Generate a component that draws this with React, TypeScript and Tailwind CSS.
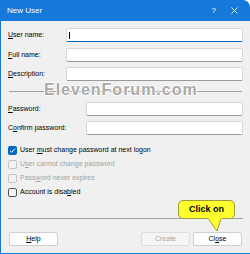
import React from "react";

const font = { fontFamily: '"Liberation Sans", Arial, sans-serif' };

function U({ children }: { children: React.ReactNode }) {
  return <span className="underline underline-offset-[1px] decoration-[0.5px]">{children}</span>;
}

function Field({ label, labelW, focused }: { label: React.ReactNode; labelW: string; focused?: boolean }) {
  return (
    <div className="flex items-center h-[14px]">
      <div className={`${labelW} shrink-0 text-[7px] text-black`}>{label}</div>
      <div
        className={`flex-1 h-[14px] bg-white border border-[#d6d6d6] rounded-[2px] relative ${
          focused ? "border-b-[#0067c0] border-b-[1.5px]" : "border-b-[#9a9a9a]"
        }`}
      >
        {focused && <div className="absolute left-[2px] top-[3px] w-px h-[7px] bg-black" />}
      </div>
    </div>
  );
}

function Check({ label, checked, disabled }: { label: React.ReactNode; checked?: boolean; disabled?: boolean }) {
  return (
    <div className="flex items-center h-[14px] gap-[2px]">
      {checked ? (
        <div className="w-[9px] h-[9px] rounded-[2px] bg-[#0067c0] flex items-center justify-center">
          <svg width="7" height="7" viewBox="0 0 7 7">
            <path d="M1 3.6 L2.8 5.3 L6 1.6" stroke="white" strokeWidth="1" fill="none" />
          </svg>
        </div>
      ) : (
        <div
          className={`w-[9px] h-[9px] rounded-[2px] border ${
            disabled ? "border-[#c4c4c4] bg-[#f3f3f3]" : "border-[#555] bg-[#f7f7f7]"
          }`}
        />
      )}
      <span className={`text-[7px] ml-[1px] ${disabled ? "text-[#a2a2a2]" : "text-black"}`}>{label}</span>
    </div>
  );
}

function Btn({ children, disabled }: { children: React.ReactNode; disabled?: boolean }) {
  return (
    <div
      className={`w-[49px] h-[14px] rounded-[2px] border flex items-center justify-center text-[7px] ${
        disabled ? "border-[#dedede] bg-[#f5f5f5] text-[#a8a8a8]" : "border-[#d0d0d0] bg-[#fdfdfd] text-black"
      }`}
    >
      {children}
    </div>
  );
}

export default function App() {
  return (
    <div className="w-[250px] h-[254px] relative overflow-hidden bg-white" style={font}>
      <div className="flex flex-col h-full border-l border-b border-[#1479d8] rounded-tr-[7px] overflow-hidden">
        {/* Title bar */}
        <div className="h-[21px] bg-[#1479d8] flex items-center pl-[6px] pr-[12px] text-white shrink-0">
          <span className="text-[8px]">New User</span>
          <div className="ml-auto flex items-center gap-[15px]">
            <span className="text-[8px]">?</span>
            <svg width="7" height="7" viewBox="0 0 7 7">
              <path d="M0.5 0.5 L6.5 6.5 M6.5 0.5 L0.5 6.5" stroke="white" strokeWidth="0.9" />
            </svg>
          </div>
        </div>
        {/* Body */}
        <div className="flex-1 bg-[#f0f0f0] flex flex-col pl-[7px] pr-[7px]">
          <div className="mt-[7px]">
            <Field label={<><U>U</U>ser name:</>} labelW="w-[58px]" focused />
          </div>
          <div className="mt-[6px]">
            <Field label={<><U>F</U>ull name:</>} labelW="w-[58px]" />
          </div>
          <div className="mt-[5px]">
            <Field label={<><U>D</U>escription:</>} labelW="w-[58px]" />
          </div>
          <div className="mt-[10px] h-px bg-[#a0a0a0] ml-[1px] mr-[1px]" />
          <div className="mt-[10px]">
            <Field label={<><U>P</U>assword:</>} labelW="w-[78px]" />
          </div>
          <div className="mt-[5px]">
            <Field label={<>C<U>o</U>nfirm password:</>} labelW="w-[78px]" />
          </div>
          <div className="mt-[8px] flex flex-col">
            <Check checked label={<>User <U>m</U>ust change password at next logon</>} />
            <Check disabled label={<>U<U>s</U>er cannot change password</>} />
            <Check disabled label={<>Pass<U>w</U>ord never expires</>} />
            <Check label={<>Account is disa<U>b</U>led</>} />
          </div>
          <div className="mt-[19px] h-px bg-[#a0a0a0]" />
          <div className="mt-[13px] flex items-center pl-[1px] pr-[1px]">
            <Btn>
              <U>H</U>elp
            </Btn>
            <div className="ml-auto flex gap-[3px]">
              <Btn disabled>Create</Btn>
              <Btn>
                Cl<U>o</U>se
              </Btn>
            </div>
          </div>
        </div>
      </div>

      {/* Watermark */}
      <div
        className="absolute left-[44px] top-[82px] text-[16px] font-bold tracking-[1px] text-[#a9a9a9] leading-none"
        style={{ textShadow: "0 0 1px #fff, 1px 0 0 #fff, -1px 0 0 #fff, 0 1px 0 #fff, 0 -1px 0 #fff" }}
      >
        ElevenForum.com
      </div>

      {/* Callout */}
      <div className="absolute left-[178px] top-[200px] w-[57px] h-[19px] rounded-[5px] bg-[#ffff2e] border border-[#9c9c3c] flex items-center justify-center text-[9px] font-bold text-black">
        Click on
      </div>
      <svg className="absolute left-[207px] top-[217px]" width="18" height="16" viewBox="0 0 18 16">
        <path d="M1 1.5 L10 14 L14 1.5" fill="#ffff2e" stroke="#9c9c3c" strokeWidth="1" />
        <path d="M0.5 0 L15 0 L14.3 2 L1.5 2 Z" fill="#ffff2e" />
      </svg>
    </div>
  );
}
